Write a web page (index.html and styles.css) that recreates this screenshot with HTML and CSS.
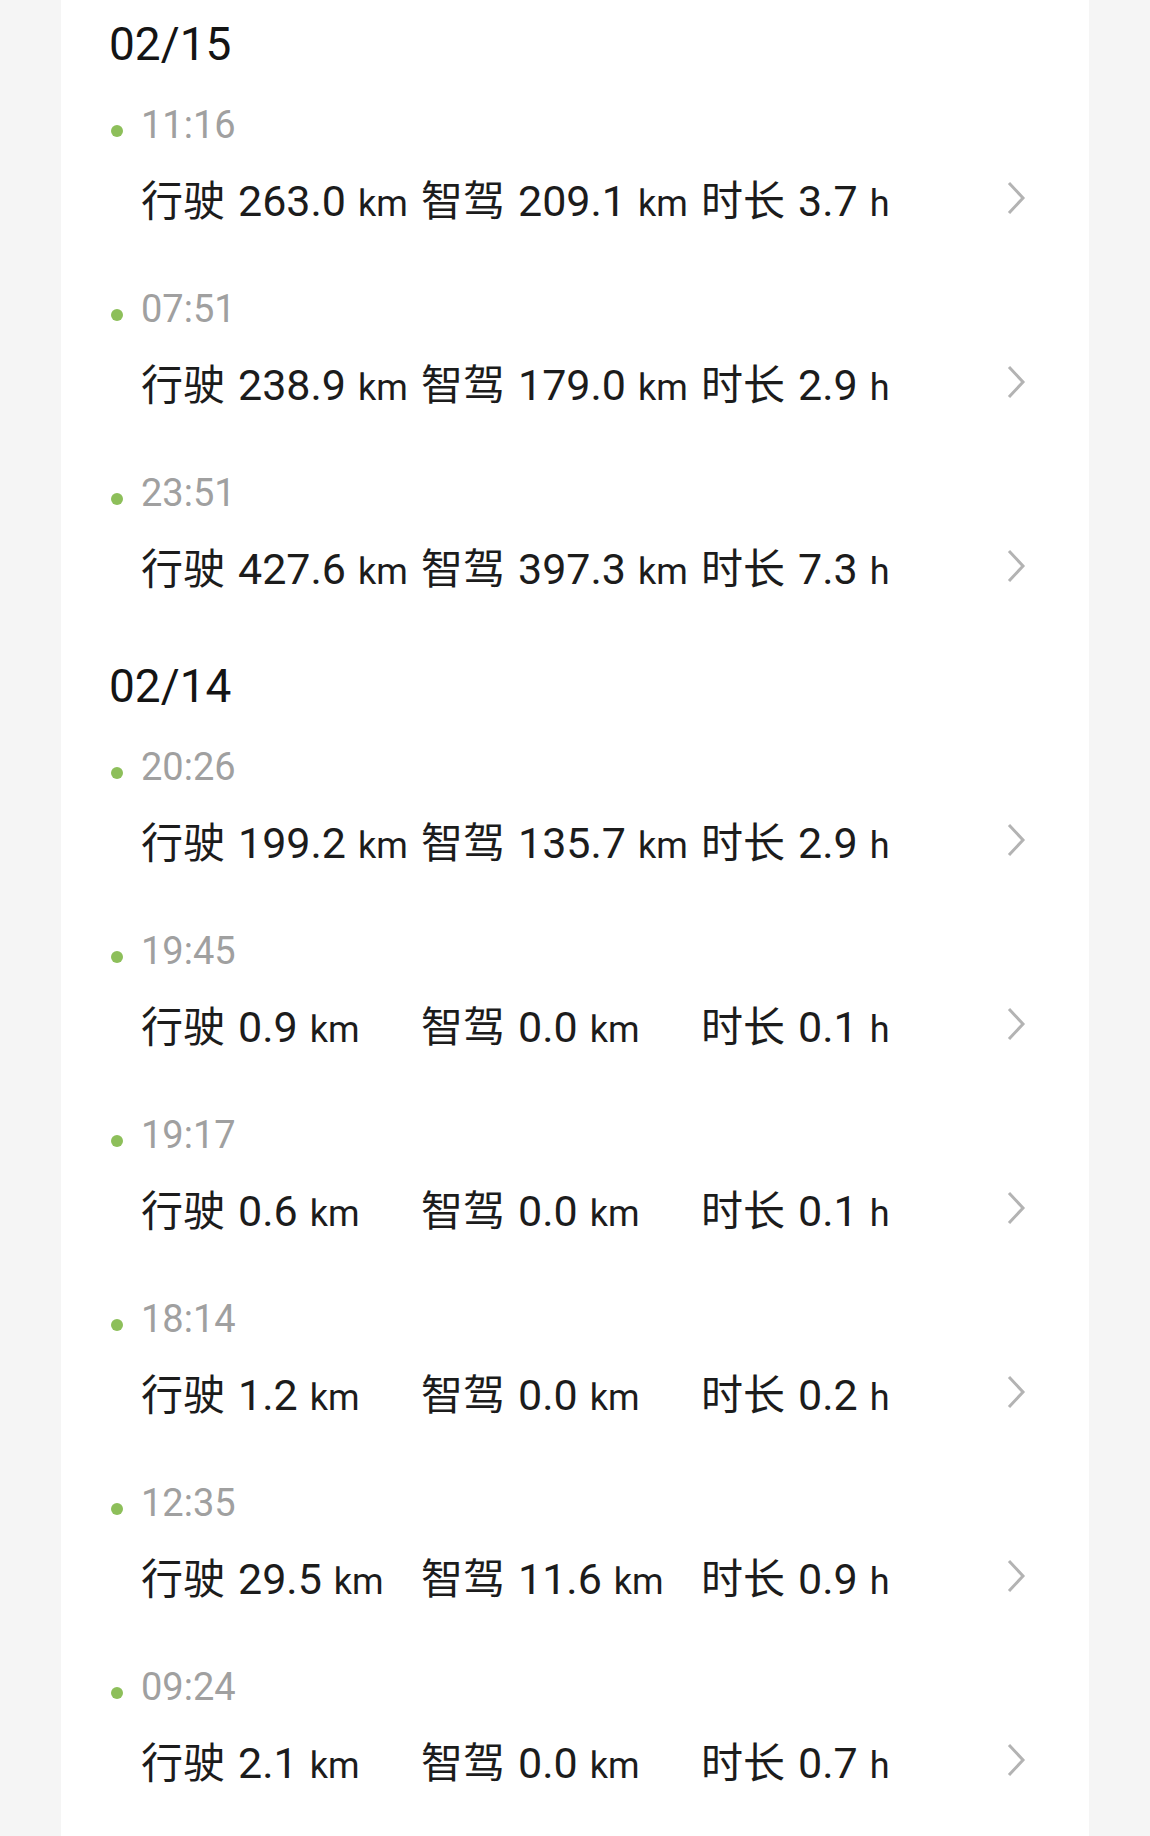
FILE: index.html
```html
<!DOCTYPE html>
<html lang="zh-CN">

<head>
    <meta charset="UTF-8">
    <meta name="viewport" content="width=device-width, initial-scale=1.0">
    <title>行程记录</title>
    <link rel="stylesheet" href="styles.css">
</head>

<body>
    <div class="card">
        <!-- 02/15 -->
        <div class="day">
            <div class="date">02/15</div>
            <div class="trip">
                <div class="time">11:16</div>
                <div class="stats">
                    <div class="cols">
                        <span class="item"><span class="k">行驶</span><span class="v">263.0</span><span class="u">km</span></span>
                        <span class="item"><span class="k">智驾</span><span class="v">209.1</span><span class="u">km</span></span>
                        <span class="item"><span class="k">时长</span><span class="v">3.7</span><span class="u">h</span></span>
                    </div>
                    <svg class="arrow" viewBox="0 0 24 36"><path d="M5 3 L19 18 L5 33" /></svg>
                </div>
            </div>
            <div class="trip">
                <div class="time">07:51</div>
                <div class="stats">
                    <div class="cols">
                        <span class="item"><span class="k">行驶</span><span class="v">238.9</span><span class="u">km</span></span>
                        <span class="item"><span class="k">智驾</span><span class="v">179.0</span><span class="u">km</span></span>
                        <span class="item"><span class="k">时长</span><span class="v">2.9</span><span class="u">h</span></span>
                    </div>
                    <svg class="arrow" viewBox="0 0 24 36"><path d="M5 3 L19 18 L5 33" /></svg>
                </div>
            </div>
            <div class="trip">
                <div class="time">23:51</div>
                <div class="stats">
                    <div class="cols">
                        <span class="item"><span class="k">行驶</span><span class="v">427.6</span><span class="u">km</span></span>
                        <span class="item"><span class="k">智驾</span><span class="v">397.3</span><span class="u">km</span></span>
                        <span class="item"><span class="k">时长</span><span class="v">7.3</span><span class="u">h</span></span>
                    </div>
                    <svg class="arrow" viewBox="0 0 24 36"><path d="M5 3 L19 18 L5 33" /></svg>
                </div>
            </div>
        </div>

        <!-- 02/14 -->
        <div class="day">
            <div class="date">02/14</div>
            <div class="trip">
                <div class="time">20:26</div>
                <div class="stats">
                    <div class="cols">
                        <span class="item"><span class="k">行驶</span><span class="v">199.2</span><span class="u">km</span></span>
                        <span class="item"><span class="k">智驾</span><span class="v">135.7</span><span class="u">km</span></span>
                        <span class="item"><span class="k">时长</span><span class="v">2.9</span><span class="u">h</span></span>
                    </div>
                    <svg class="arrow" viewBox="0 0 24 36"><path d="M5 3 L19 18 L5 33" /></svg>
                </div>
            </div>
            <div class="trip">
                <div class="time">19:45</div>
                <div class="stats">
                    <div class="cols">
                        <span class="item"><span class="k">行驶</span><span class="v">0.9</span><span class="u">km</span></span>
                        <span class="item"><span class="k">智驾</span><span class="v">0.0</span><span class="u">km</span></span>
                        <span class="item"><span class="k">时长</span><span class="v">0.1</span><span class="u">h</span></span>
                    </div>
                    <svg class="arrow" viewBox="0 0 24 36"><path d="M5 3 L19 18 L5 33" /></svg>
                </div>
            </div>
            <div class="trip">
                <div class="time">19:17</div>
                <div class="stats">
                    <div class="cols">
                        <span class="item"><span class="k">行驶</span><span class="v">0.6</span><span class="u">km</span></span>
                        <span class="item"><span class="k">智驾</span><span class="v">0.0</span><span class="u">km</span></span>
                        <span class="item"><span class="k">时长</span><span class="v">0.1</span><span class="u">h</span></span>
                    </div>
                    <svg class="arrow" viewBox="0 0 24 36"><path d="M5 3 L19 18 L5 33" /></svg>
                </div>
            </div>
            <div class="trip">
                <div class="time">18:14</div>
                <div class="stats">
                    <div class="cols">
                        <span class="item"><span class="k">行驶</span><span class="v">1.2</span><span class="u">km</span></span>
                        <span class="item"><span class="k">智驾</span><span class="v">0.0</span><span class="u">km</span></span>
                        <span class="item"><span class="k">时长</span><span class="v">0.2</span><span class="u">h</span></span>
                    </div>
                    <svg class="arrow" viewBox="0 0 24 36"><path d="M5 3 L19 18 L5 33" /></svg>
                </div>
            </div>
            <div class="trip">
                <div class="time">12:35</div>
                <div class="stats">
                    <div class="cols">
                        <span class="item"><span class="k">行驶</span><span class="v">29.5</span><span class="u">km</span></span>
                        <span class="item"><span class="k">智驾</span><span class="v">11.6</span><span class="u">km</span></span>
                        <span class="item"><span class="k">时长</span><span class="v">0.9</span><span class="u">h</span></span>
                    </div>
                    <svg class="arrow" viewBox="0 0 24 36"><path d="M5 3 L19 18 L5 33" /></svg>
                </div>
            </div>
            <div class="trip">
                <div class="time">09:24</div>
                <div class="stats">
                    <div class="cols">
                        <span class="item"><span class="k">行驶</span><span class="v">2.1</span><span class="u">km</span></span>
                        <span class="item"><span class="k">智驾</span><span class="v">0.0</span><span class="u">km</span></span>
                        <span class="item"><span class="k">时长</span><span class="v">0.7</span><span class="u">h</span></span>
                    </div>
                    <svg class="arrow" viewBox="0 0 24 36"><path d="M5 3 L19 18 L5 33" /></svg>
                </div>
            </div>
        </div>
    </div>
</body>

</html>
```

FILE: styles.css
```css
body {
    margin: 0;
    background-color: #f5f5f5;
    /* 数字用 Roboto，中文回退到思源黑体 */
    font-family: Roboto, "Noto Sans CJK SC", sans-serif;
    color: #1c1c1c;
}

.card {
    min-height: 100vh;
    margin: 0 61px;
    padding: 14px 62px 0 48px;
    background-color: #fff;
}

.day + .day {
    margin-top: 4px;
}

.date {
    font-size: 46px;
    line-height: 60px;
    color: #141414;
    margin-bottom: 26px;
}

/* 每条行程 184px 一行 */
.trip {
    padding-left: 2px;
    padding-bottom: 52px;
}

.time {
    display: flex;
    align-items: flex-start;
    height: 50px;
    font-size: 38px;
    line-height: 50px;
    color: #a0a0a0;
}

.time::before {
    content: '';
    flex: none;
    width: 12px;
    height: 12px;
    margin-top: 25px;
    margin-right: 18px;
    border-radius: 50%;
    background-color: #8dbf5a;
}

.stats {
    display: flex;
    align-items: center;
    height: 60px;
    margin-top: 22px;
    padding-left: 30px;
}

.cols {
    display: grid;
    grid-template-columns: 280px 280px auto;
    height: 60px;
    font-size: 42px;
    line-height: 60px;
}

.item {
    white-space: nowrap;
}

.item .v {
    margin-left: 13px;
    font-size: 43px;
    line-height: 1;
}

.item .u {
    margin-left: 12px;
    font-size: 36px;
    line-height: 1;
}

.arrow {
    width: 24px;
    height: 36px;
    margin-left: auto;
    margin-right: -1px;
    position: relative;
    top: -4px;
}

.arrow path {
    fill: none;
    stroke: #b3b3b3;
    stroke-width: 3;
}
```
